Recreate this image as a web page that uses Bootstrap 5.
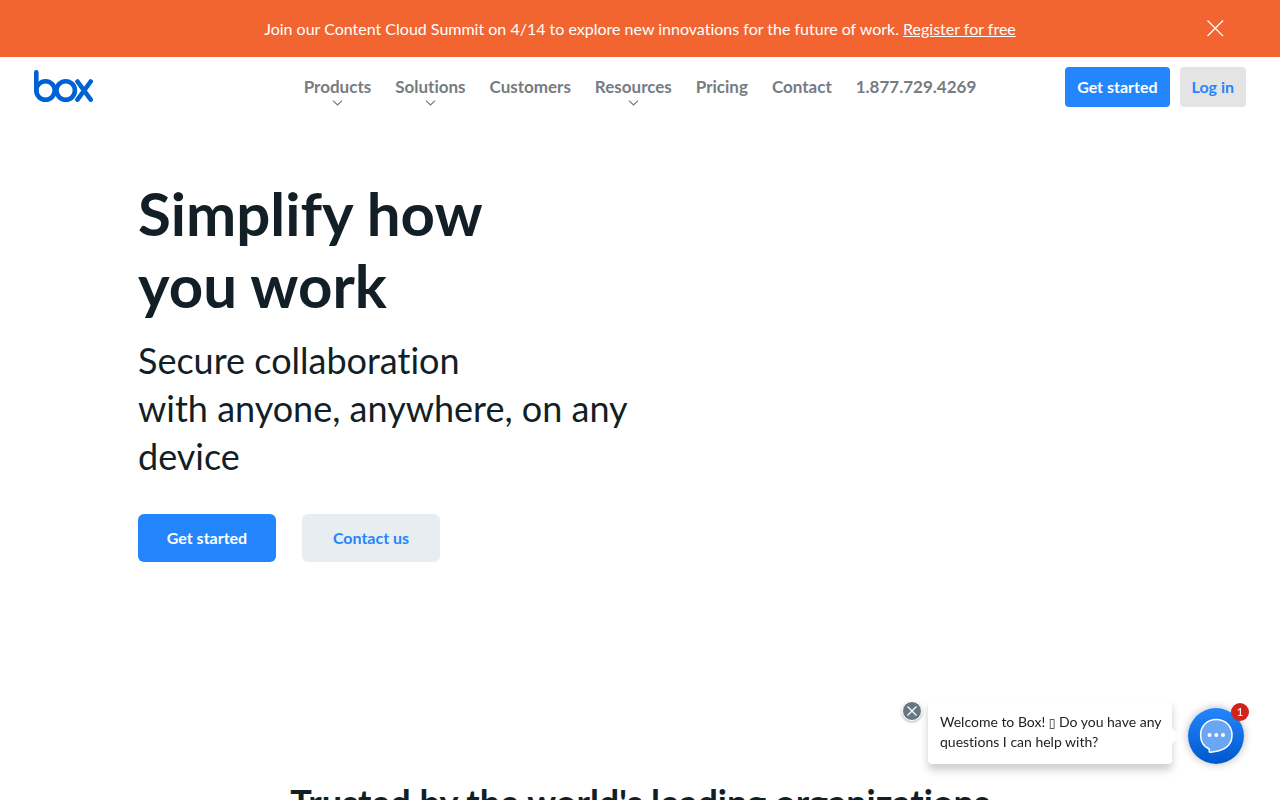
<!DOCTYPE html>
<html lang="en">
<head>
<meta charset="utf-8">
<meta name="viewport" content="width=device-width, initial-scale=1">
<title>Box | Simplify how you work</title>
<link href="https://cdn.jsdelivr.net/npm/bootstrap@5.3.0/dist/css/bootstrap.min.css" rel="stylesheet">
<style>
body { font-family: Lato, "Liberation Sans", sans-serif; font-variant-ligatures: none; color: #121f26; background: #fff; }
.promo { background: #f26531; color: #fff; min-height: 57px; padding: 16px 56px; }
.promo p { line-height: 25px; }
.icon-btn { line-height: 0; background: none; border: 0; padding: 0; }
.promo-close { right: 56px; top: 20px; }
.site-nav { min-height: 60px; padding: 10px 34px; }
.site-nav .side { flex: 1 1 0; }
.site-nav .nav-link { position: relative; padding: 0 12px; font-size: 17px; line-height: 40px; font-weight: 700; color: #767c81; white-space: nowrap; }
.site-nav .nav-link svg { position: absolute; left: 50%; margin-left: -5px; bottom: 1px; }
.site-nav .side:last-child { gap: 10px; }
.btn { --bs-btn-border-width: 0; font-weight: 700; font-size: 16px; line-height: 24px; white-space: nowrap; }
.btn-sm-box { padding: 8px 12px; border-radius: 4px; }
.btn-lg-box { padding: 12px 0; width: 138px; border-radius: 6px; }
.btn-blue, .btn-blue:hover { background: #2486fc; color: #fff; }
.btn-soft, .btn-soft:hover { background: #e8edf1; color: #2486fc; }
.btn-gray, .btn-gray:hover { background: #e4e4e4; color: #2486fc; }
.hero { max-width: 1028px; padding: 60px 12px 0; min-height: 661px; }
.hero h1 { font-size: 60px; line-height: 72px; font-weight: 700; margin-bottom: 15px; }
.hero .tagline { font-size: 36px; line-height: 48px; margin-bottom: 34px; }
.hero .actions { gap: 26px; }
.trusted h2 { font-size: 36px; line-height: 48px; font-weight: 700; }
.chat { right: 36px; bottom: 36px; gap: 16px; }
.bubble { width: 244px; padding: 12px 4px 12px 12px; border-radius: 4px; font-size: 14px; line-height: 20px; color: #222; background: #fff; box-shadow: 0 6px 8px rgba(0,0,0,.2); }
.bubble::after { content: ""; position: absolute; left: 100%; top: 50%; margin-top: -4px; border: 8px solid transparent; border-left-color: #fff; border-right: 0; }
.bubble .glyph { font-family: "DejaVu Sans", sans-serif; font-size: 12px; line-height: 12px; }
.bubble-close { left: -26px; top: 1px; border-radius: 50%; box-shadow: 0 1px 3px rgba(0,0,0,.35); }
.chat-btn { width: 56px; height: 56px; border-radius: 50%; background: linear-gradient(#2486fc, #0057cc); box-shadow: 0 0 10px rgba(0,0,0,.28); }
.unread { right: -5px; top: -5px; width: 18px; height: 18px; border-radius: 50%; background: #d3231a; color: #fff; font-size: 12px; line-height: 18px; }
</style>
</head>
<body>
<div class="promo position-relative text-center">
  <p class="m-0">Join our Content Cloud Summit on 4/14 to explore new innovations for the future of work. <a href="#" class="text-white">Register for free</a></p>
  <button type="button" class="icon-btn promo-close position-absolute" aria-label="Close banner">
    <svg width="18" height="17" viewBox="0 0 18 17" fill="none" stroke="#fff" stroke-width="1.3"><path d="M1.5 .5l15.500 15.500M17 .5L1.500 16"/></svg>
  </button>
</div>

<header class="site-nav d-flex align-items-center">
  <div class="side d-flex">
    <a href="#" aria-label="Box home">
      <svg class="d-block" width="59" height="34" viewBox="0 0 59 34" fill="none" stroke="#0061d5" stroke-width="4.600" stroke-linecap="round" stroke-linejoin="round"><path d="M2.300 2.300V20.500"/><circle cx="11.500" cy="20.500" r="9.200"/><circle cx="31.700" cy="20.500" r="9.200"/><path d="M43.500 11.500L56.700 29.600M56.700 11.500L43.500 29.600"/></svg>
    </a>
  </div>
  <nav class="nav flex-nowrap" aria-label="Main">
    <a class="nav-link" href="#">Products<svg width="11" height="6" viewBox="0 0 11 6" fill="none" stroke="#657983" stroke-width="1.1"><path d="M1 .7l4.500 4.300L10 .7"/></svg></a>
    <a class="nav-link" href="#">Solutions<svg width="11" height="6" viewBox="0 0 11 6" fill="none" stroke="#657983" stroke-width="1.1"><path d="M1 .7l4.500 4.300L10 .7"/></svg></a>
    <a class="nav-link" href="#">Customers</a>
    <a class="nav-link" href="#">Resources<svg width="11" height="6" viewBox="0 0 11 6" fill="none" stroke="#657983" stroke-width="1.1"><path d="M1 .7l4.500 4.300L10 .7"/></svg></a>
    <a class="nav-link" href="#">Pricing</a>
    <a class="nav-link" href="#">Contact</a>
    <a class="nav-link" href="#">1.877.729.4269</a>
  </nav>
  <div class="side d-flex justify-content-end">
    <button type="button" class="btn btn-blue btn-sm-box">Get started</button>
    <button type="button" class="btn btn-gray btn-sm-box">Log in</button>
  </div>
</header>

<main>
  <section class="hero container">
    <div class="row">
      <div class="col-md-6">
        <h1>Simplify how<br>you work</h1>
        <p class="tagline">Secure collaboration<br>with anyone, anywhere, on any device</p>
        <div class="actions d-flex">
          <button type="button" class="btn btn-blue btn-lg-box">Get started</button>
          <button type="button" class="btn btn-soft btn-lg-box">Contact us</button>
        </div>
      </div>
    </div>
  </section>
  <section class="trusted container text-center pb-5">
    <h2 class="m-0">Trusted by the world's leading organizations</h2>
  </section>
</main>

<aside class="chat position-fixed d-flex align-items-end" aria-label="Chat">
  <div class="bubble position-relative">
    Welcome to Box! <span class="glyph">▯</span> Do you have any questions I can help with?
    <button type="button" class="icon-btn bubble-close position-absolute" aria-label="Dismiss message">
      <svg width="20" height="20" viewBox="0 0 20 20"><circle cx="10" cy="10" r="9.500" fill="#657883" stroke="#fff"/><path d="M5.500 5.500l9 9M14.500 5.500l-9 9" stroke="#fff" stroke-width="1.300"/></svg>
    </button>
  </div>
  <button type="button" class="icon-btn chat-btn position-relative" aria-label="Open chat">
    <svg width="56" height="56" viewBox="0 0 56 56"><path d="M21.500 41.300C15.700 38.600 12.600 33.400 12.600 27.200 12.600 17.800 19.300 11.500 28.200 11.500S44 17.800 44 27C44 37 37 41 31 42.700L22.800 44.300C21.200 44.500 20.800 43.300 21.500 41.300Z" fill="#6aa6f3" stroke="#fff" stroke-width="1.500" stroke-linejoin="round"/><g fill="#fff"><circle cx="21.500" cy="27" r="2"/><circle cx="28.300" cy="27" r="2"/><circle cx="35" cy="27" r="2"/></g></svg>
    <span class="unread position-absolute">1</span>
  </button>
</aside>
<script src="https://cdn.jsdelivr.net/npm/bootstrap@5.3.0/dist/js/bootstrap.bundle.min.js"></script>
</body>
</html>
